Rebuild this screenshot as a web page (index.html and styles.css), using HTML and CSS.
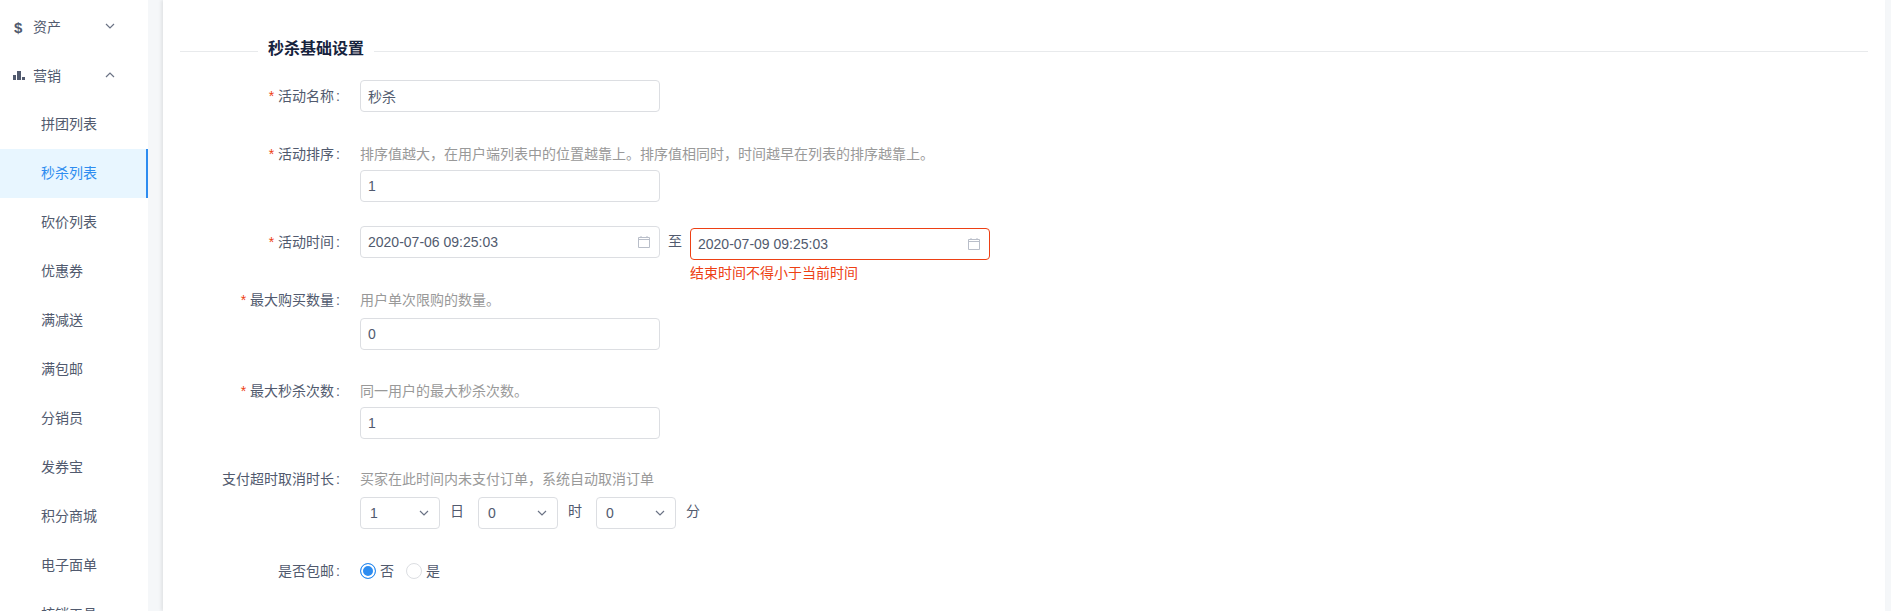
FILE: index.html
```html
<!DOCTYPE html>
<html lang="zh-CN">
<head>
<meta charset="utf-8">
<title>秒杀基础设置</title>
<link rel="stylesheet" href="styles.css">
</head>
<body>
<div class="page">
  <nav class="side">
    <div class="group"><span class="dollar">$</span><span class="group-name">资产</span>
      <svg class="chev" viewBox="0 0 10 6"><path d="M1 1l4 4 4-4"/></svg></div>
    <div class="group"><svg class="chart" viewBox="0 0 12 9"><path d="M0 4h3v5H0zM4 0h4v9H4zM9 6h3v3H9z"/></svg><span class="group-name">营销</span>
      <svg class="chev" viewBox="0 0 10 6"><path d="M1 5l4-4 4 4"/></svg></div>
    <a class="item">拼团列表</a>
    <a class="item active">秒杀列表</a>
    <a class="item">砍价列表</a>
    <a class="item">优惠券</a>
    <a class="item">满减送</a>
    <a class="item">满包邮</a>
    <a class="item">分销员</a>
    <a class="item">发券宝</a>
    <a class="item">积分商城</a>
    <a class="item">电子面单</a>
    <a class="item">核销工具</a>
  </nav>
  <main class="card">
    <div class="legend"><h2 class="legend-title">秒杀基础设置</h2></div>

    <div class="row row-name">
      <label class="label req">活动名称</label>
      <div class="ctrl"><input class="field" value="秒杀" readonly></div>
    </div>

    <div class="row row-sort">
      <label class="label req">活动排序</label>
      <div class="ctrl">
        <p class="help">排序值越大，在用户端列表中的位置越靠上。排序值相同时，时间越早在列表的排序越靠上。</p>
        <input class="field" value="1" readonly>
      </div>
    </div>

    <div class="row row-time">
      <label class="label req">活动时间</label>
      <div class="date-wrap">
        <input class="field" value="2020-07-06 09:25:03" readonly>
        <svg class="cal" viewBox="0 0 12 12"><path d="M.5 1.5h11v10H.5zM.5 3.5h11M3 0v2M9 0v2"/></svg>
      </div>
      <span class="to">至</span>
      <div class="end-col">
        <div class="date-wrap">
          <input class="field field-error" value="2020-07-09 09:25:03" readonly>
          <svg class="cal" viewBox="0 0 12 12"><path d="M.5 1.5h11v10H.5zM.5 3.5h11M3 0v2M9 0v2"/></svg>
        </div>
        <div class="error">结束时间不得小于当前时间</div>
      </div>
    </div>

    <div class="row row-max">
      <label class="label req">最大购买数量</label>
      <div class="ctrl">
        <p class="help help-wide">用户单次限购的数量。</p>
        <input class="field" value="0" readonly>
      </div>
    </div>

    <div class="row row-times">
      <label class="label req">最大秒杀次数</label>
      <div class="ctrl">
        <p class="help">同一用户的最大秒杀次数。</p>
        <input class="field" value="1" readonly>
      </div>
    </div>

    <div class="row row-pay">
      <label class="label">支付超时取消时长</label>
      <div class="ctrl">
        <p class="help help-wide">买家在此时间内未支付订单，系统自动取消订单</p>
        <div class="selects">
          <div class="select"><span>1</span><svg class="chev" viewBox="0 0 10 6"><path d="M1 1l4 4 4-4"/></svg></div>
          <span class="unit">日</span>
          <div class="select"><span>0</span><svg class="chev" viewBox="0 0 10 6"><path d="M1 1l4 4 4-4"/></svg></div>
          <span class="unit">时</span>
          <div class="select"><span>0</span><svg class="chev" viewBox="0 0 10 6"><path d="M1 1l4 4 4-4"/></svg></div>
          <span class="unit">分</span>
        </div>
      </div>
    </div>

    <div class="row row-ship">
      <label class="label">是否包邮</label>
      <div class="radios">
        <span class="radio on"></span><span class="radio-text">否</span>
        <span class="radio"></span><span class="radio-text">是</span>
      </div>
    </div>
  </main>
</div>
</body>
</html>
```

FILE: styles.css
```css
* { box-sizing: border-box; }
html, body { margin: 0; height: 611px; overflow: hidden; }
body {
  font-family: "Liberation Sans", "Noto Sans CJK SC", sans-serif;
  font-size: 14px;
  color: #515a6e;
  background: #f5f7f9;
}
.page { display: flex; height: 611px; overflow: hidden; }

/* sidebar */
.side { width: 148px; flex: none; background: #fff; padding-top: 2px; height: 640px; }
.group { height: 49px; display: flex; align-items: center; padding: 0 0 1px 14px; position: relative; }
.dollar { width: 19px; font-weight: 700; font-size: 15px; margin-top: 3px; }
.chart { width: 12px; height: 9px; margin: 1px 8px 0 -1px; fill: #515a6e; }
.group-name { flex: none; }
.group .chev { margin-left: 44px; }
.chev { width: 10px; height: 6px; fill: none; stroke: #6b7385; stroke-width: 1.2; flex: none; }
.item { display: block; height: 49px; line-height: 49px; padding-left: 41px; }
.item.active { color: #2d8cf0; background: #e8f6ff; border-right: 2px solid #2d8cf0; }

/* card */
.card {
  margin-left: 15px;
  width: 1722px;
  flex: none;
  background: #fff;
  padding: 0 17px;
  box-shadow: -2px 0 3px rgba(0, 0, 0, .08);
}
.legend { height: 52px; border-bottom: 1px solid #e8eaec; position: relative; }
.legend-title {
  position: absolute;
  left: 78px;
  top: 37px;
  margin: 0;
  padding: 0 10px;
  background: #fff;
  font-size: 16px;
  line-height: 24px;
  font-weight: 700;
  color: #17233d;
}

/* form rows */
.row { display: flex; align-items: flex-start; }
.row-name { margin-top: 28px; }
.row-sort { margin-top: 32px; }
.row-time { margin-top: 24px; }
.row-max { margin-top: 0; }
.row-times { margin-top: 31px; }
.row-pay { margin-top: 30px; }
.row-ship { margin-top: 34px; }

.label { width: 160px; flex: none; text-align: right; line-height: 32px; margin-right: 20px; }
.label::after { content: ":"; margin-left: 2px; }
.row-sort .label, .row-max .label, .row-times .label, .row-pay .label { line-height: 20px; }
.row-time .label { line-height: 33px; }
.req::before { content: "*"; color: #ed4014; margin-right: 4px; font-size: 14px; }

.help { margin: 0 0 6px; height: 20px; line-height: 20px; color: #999; }
.help-wide { margin-bottom: 8px; }

.field {
  display: block;
  width: 300px;
  height: 32px;
  padding: 0 7px;
  border: 1px solid #dcdee2;
  border-radius: 4px;
  background: #fff;
  color: #515a6e;
  font: inherit;
  outline: none;
}
.field-error { border-color: #ed4014; }

.date-wrap { position: relative; width: 300px; flex: none; }
.cal {
  position: absolute;
  right: 10px;
  top: 10px;
  width: 12px;
  height: 12px;
  fill: none;
  stroke: #b9bec9;
  stroke-width: 1;
}
.to { width: 30px; text-align: center; line-height: 30px; flex: none; }
.end-col { margin-top: 2px; width: 300px; }
.error { color: #ed4014; line-height: 20px; margin-top: 3px; height: 27px; }

.selects { display: flex; align-items: flex-start; }
.select {
  width: 80px;
  height: 32px;
  border: 1px solid #dcdee2;
  border-radius: 4px;
  display: flex;
  align-items: center;
  justify-content: space-between;
  padding: 0 10px 0 9px;
}
.unit { width: 38px; padding-right: 4px; text-align: center; line-height: 28px; }

.radios { display: flex; align-items: center; height: 16px; line-height: 16px; }
.row-ship .label { line-height: 16px; }
.radio {
  width: 16px;
  height: 16px;
  border: 1px solid #dcdee2;
  border-radius: 50%;
  background: #fff;
  flex: none;
}
.radio.on { border-color: #2d8cf0; background: #2d8cf0; box-shadow: inset 0 0 0 2px #fff; }
.radio-text { margin-left: 4px; margin-right: 12px; }
```
